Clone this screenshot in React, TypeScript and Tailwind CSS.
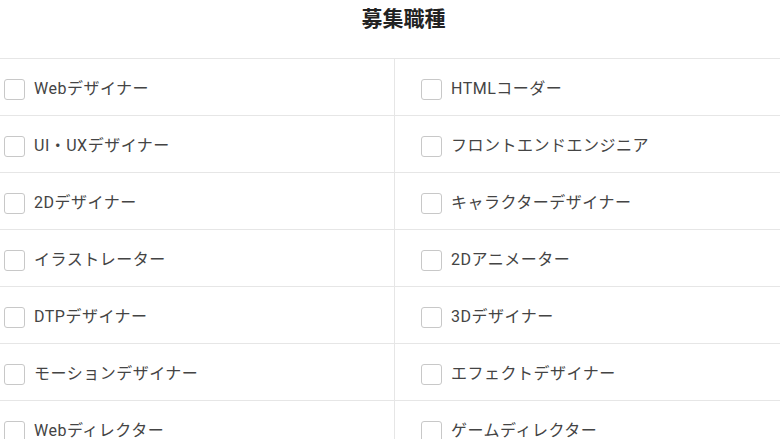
import React from "react";

const left = [
  "Webデザイナー",
  "UI・UXデザイナー",
  "2Dデザイナー",
  "イラストレーター",
  "DTPデザイナー",
  "モーションデザイナー",
  "Webディレクター",
];
const right = [
  "HTMLコーダー",
  "フロントエンドエンジニア",
  "キャラクターデザイナー",
  "2Dアニメーター",
  "3Dデザイナー",
  "エフェクトデザイナー",
  "ゲームディレクター",
];

function Cell({ label, side }: { label: string; side: "l" | "r" }) {
  return (
    <label
      className={
        side === "l"
          ? "flex h-[57px] items-center border-b border-r border-[#e6e6e6] pl-[4px] pt-[4px]"
          : "flex h-[57px] items-center border-b border-[#e6e6e6] pl-[26px] pt-[4px]"
      }
    >
      <span className="block h-[21px] w-[21px] rounded-[3px] border border-[#c8c8c8] bg-white" />
      <span className="ml-[9px] text-[16px] tracking-[0.5px] text-[#444]">{label}</span>
    </label>
  );
}

export default function App() {
  const rows = left.map((l, i) => [l, right[i]]);
  return (
    <div
      className="h-[439px] w-[780px] overflow-hidden bg-white"
      style={{ fontFamily: 'Roboto, "Noto Sans CJK JP", sans-serif' }}
    >
      <div className="flex h-[58px] items-start justify-center pt-[4px]">
        <h2 className="ml-[27px] text-[21px] font-bold text-[#222]">募集職種</h2>
      </div>
      <div className="grid grid-cols-[395px_1fr] border-t border-[#e6e6e6]">
        {rows.map(([l, r]) => (
          <React.Fragment key={l}>
            <Cell label={l} side="l" />
            <Cell label={r} side="r" />
          </React.Fragment>
        ))}
      </div>
    </div>
  );
}
